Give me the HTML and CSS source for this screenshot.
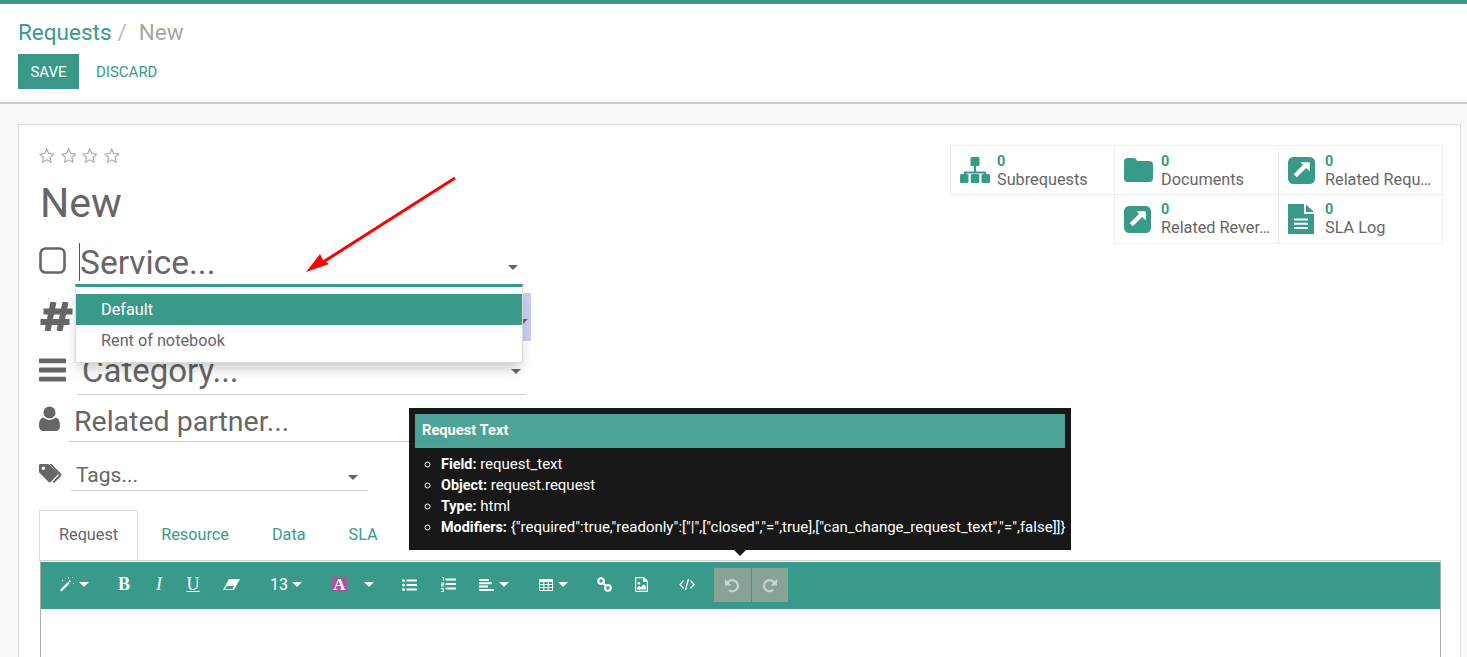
FILE: index.html
```html
<!DOCTYPE html>
<html lang="en">
<head>
    <meta charset="UTF-8">
    <title>Requests / New</title>
    <link rel="stylesheet" href="styles.css">
</head>
<body>
    <svg class="defs" width="0" height="0">
        <symbol id="star" viewBox="0 0 16 16"><path d="M8 1.200l2.100 4.500 4.900.6-3.600 3.400.9 4.900L8 12.200l-4.300 2.400.9-4.900L1 6.300l4.900-.6z" fill="none" stroke="#a8a8a8" stroke-width="1.200"/></symbol>
        <symbol id="extlink" viewBox="0 0 26 26"><path fill-rule="evenodd" d="M5 0h16a5 5 0 0 1 5 5v16a5 5 0 0 1-5 5H5a5 5 0 0 1-5-5V5a5 5 0 0 1 5-5zm7 5h9v9l-3.500-3.500-9 9-3-3 9-9z" fill="#3a9a8a"/></symbol>
    </svg>

    <header class="control-panel">
        <div class="breadcrumb">
            <a class="crumb-link">Requests</a><span class="crumb-sep">/</span><span class="crumb-current">New</span>
        </div>
        <div class="actions">
            <button class="btn-save">SAVE</button>
            <button class="btn-discard">DISCARD</button>
        </div>
    </header>

    <main class="content">
        <div class="sheet">
            <div class="sheet-top">
                <div class="form-col">
                    <div class="stars">
                        <svg class="star"><use href="#star"/></svg>
                        <svg class="star"><use href="#star"/></svg>
                        <svg class="star"><use href="#star"/></svg>
                        <svg class="star"><use href="#star"/></svg>
                    </div>
                    <h1 class="title">New</h1>

                    <div class="row row-service">
                        <svg class="icon-check" viewBox="0 0 27 27"><rect x="1.500" y="1.500" width="24" height="24" rx="5" fill="none" stroke="#666" stroke-width="2.600"/></svg>
                        <div class="field field-service"><span class="cursor"></span>Service...<span class="caret caret-dark"></span></div>
                        <div class="dropdown">
                            <div class="option option-active">Default</div>
                            <div class="option">Rent of notebook</div>
                        </div>
                    </div>

                    <div class="row row-hash">
                        <svg class="icon-hash" viewBox="0 0 32 29"><path d="M7 29l6-29M19 29l6-29M3 9.500h29M0 20h29" fill="none" stroke="#666" stroke-width="6"/></svg>
                        <div class="field-required"><span class="caret caret-dark"></span></div>
                    </div>

                    <div class="row row-category">
                        <svg class="icon-bars" viewBox="0 0 28 24"><path d="M1 0h26a1 1 0 0 1 1 1v3a1 1 0 0 1-1 1H1a1 1 0 0 1-1-1V1a1 1 0 0 1 1-1zm0 9.500h26a1 1 0 0 1 1 1v3a1 1 0 0 1-1 1H1a1 1 0 0 1-1-1v-3a1 1 0 0 1 1-1zM1 19h26a1 1 0 0 1 1 1v3a1 1 0 0 1-1 1H1a1 1 0 0 1-1-1v-3a1 1 0 0 1 1-1z" fill="#666"/></svg>
                        <div class="field field-category">Category...<span class="caret caret-dark"></span></div>
                    </div>

                    <div class="row row-partner">
                        <svg class="icon-user" viewBox="0 0 21 25"><circle cx="10.500" cy="6.500" r="6" fill="#666"/><path d="M4.500 11.500c1.500 1.500 3.600 2.400 6 2.400s4.500-.9 6-2.400c2.800.3 4.500 3.200 4.500 8.500 0 3-2 5-4.500 5h-12C2 25 0 23 0 20c0-5.300 1.700-8.200 4.500-8.500z" fill="#666"/></svg>
                        <div class="field field-partner">Related partner...</div>
                    </div>

                    <div class="row row-tags">
                        <svg class="icon-tags" viewBox="0 0 24 20"><path d="M1.500 0h7.300c.6 0 1.200.3 1.700.7l8 8.200c.6.600.6 1.500 0 2.100l-6.800 6.900c-.6.600-1.500.6-2.100 0L1.300 9.600C.7 9 0 8.200 0 7.400V1.500C0 .7.700 0 1.500 0zM4.300 2.500a1.800 1.800 0 1 0 0 3.600 1.800 1.800 0 0 0 0-3.600z" fill="#666" fill-rule="evenodd"/><path d="M12.500 0l9.500 9.800c.6.600.6 1.500 0 2.100L15 19l-1.500-1 6.500-7.100L10.500 0z" fill="#666"/></svg>
                        <div class="field field-tags">Tags...<span class="caret caret-dark"></span></div>
                    </div>
                </div>

                <div class="stats">
                    <div class="stat">
                        <div class="stat-icon">
                            <svg width="30" height="26" viewBox="0 0 30 26"><path d="M15 6v10M5 20v-4.500h20V20" fill="none" stroke="#3a9a8a" stroke-width="2"/><rect x="10.500" width="9" height="9" rx="1.500" fill="#3a9a8a"/><rect y="17" width="8.500" height="9" rx="1.500" fill="#3a9a8a"/><rect x="10.800" y="17" width="8.500" height="9" rx="1.500" fill="#3a9a8a"/><rect x="21.500" y="17" width="8.500" height="9" rx="1.500" fill="#3a9a8a"/></svg>
                        </div>
                        <div class="stat-text"><span class="stat-count">0</span><span class="stat-label">Subrequests</span></div>
                    </div>
                    <div class="stat">
                        <div class="stat-icon">
                            <svg width="29" height="24" viewBox="0 0 29 24"><path d="M3.500 0h6c2 0 3 1 3.500 3h12.500C27.500 3 29 4.500 29 6.500V20.500c0 2-1.500 3.500-3.500 3.500h-22C1.500 24 0 22.500 0 20.500v-17C0 1.500 1.500 0 3.500 0z" fill="#3a9a8a"/></svg>
                        </div>
                        <div class="stat-text"><span class="stat-count">0</span><span class="stat-label">Documents</span></div>
                    </div>
                    <div class="stat">
                        <div class="stat-icon"><svg class="icon-ext"><use href="#extlink"/></svg></div>
                        <div class="stat-text"><span class="stat-count">0</span><span class="stat-label">Related Requ…</span></div>
                    </div>
                    <div class="stat stat-blank"></div>
                    <div class="stat">
                        <div class="stat-icon"><svg class="icon-ext"><use href="#extlink"/></svg></div>
                        <div class="stat-text"><span class="stat-count">0</span><span class="stat-label">Related Rever…</span></div>
                    </div>
                    <div class="stat">
                        <div class="stat-icon">
                            <svg width="26" height="30" viewBox="0 0 26 30"><path fill-rule="evenodd" d="M0 0h16v10h10v20H0zM6 14.500v2h14v-2zM6 18.800v2h14v-2zM6 23v2h14v-2z" fill="#3a9a8a"/><path d="M18 .5L26 8h-8z" fill="#3a9a8a"/></svg>
                        </div>
                        <div class="stat-text"><span class="stat-count">0</span><span class="stat-label">SLA Log</span></div>
                    </div>
                </div>
            </div>

            <ul class="tabs">
                <li class="tab tab-active">Request</li>
                <li class="tab">Resource</li>
                <li class="tab">Data</li>
                <li class="tab">SLA</li>
            </ul>

            <div class="editor">
                <div class="toolbar">
                    <span class="tool t-wand">
                        <svg width="14" height="15" viewBox="0 0 14 15"><path d="M1.500 14.500L0 13l8-8 1.500 1.500zM9.500 3l1.500 1.500-1 1L8.500 4z" fill="#fff"/><path d="M5 1h1v1H5zM2 3h1v1H2zM12 0h1v1h-1zM13 6h1v1h-1zM8 0h1v2H8z" fill="#fff"/></svg>
                        <span class="caret caret-white"></span>
                    </span>
                    <span class="tool t-bold">B</span>
                    <span class="tool t-italic">I</span>
                    <span class="tool t-under">U</span>
                    <span class="tool t-eraser">
                        <svg width="17" height="12" viewBox="0 0 17 12"><path d="M6 0h11l-6 11H0z" fill="#fff"/><path d="M1.500 10.200L4 7h7l-1.700 3.200z" fill="#3a9a8a"/></svg>
                    </span>
                    <span class="tool t-size">13<span class="caret caret-white"></span></span>
                    <span class="tool t-color">A</span>
                    <span class="tool t-colorcaret"><span class="caret caret-white"></span></span>
                    <span class="tool t-ul">
                        <svg width="15" height="12" viewBox="0 0 15 12"><circle cx="1.500" cy="1.500" r="1.500" fill="#fff"/><circle cx="1.500" cy="6" r="1.500" fill="#fff"/><circle cx="1.500" cy="10.500" r="1.500" fill="#fff"/><path d="M4.500.500H15v2H4.500zM4.500 5H15v2H4.500zM4.500 9.500H15v2H4.500z" fill="#fff"/></svg>
                    </span>
                    <span class="tool t-ol">
                        <svg width="15" height="15" viewBox="0 0 15 15"><path d="M4.500 1.500H15v2H4.500zM4.500 6H15v2H4.500zM4.500 10.500H15v2H4.500z" fill="#fff"/><path d="M1 0h2v3.500H2V1H1zM0 5.500h3v2.200H1v.8h2v1H0V7h2v-.5H0zM0 11h3v4H0v-1h2v-.5H1v-1h1V12H0z" fill="#fff"/></svg>
                    </span>
                    <span class="tool t-align">
                        <svg width="15" height="12" viewBox="0 0 15 12"><path d="M0 0h10v2H0zM0 3.300h13v2H0zM0 6.600h9v2H0zM0 10h15v2H0z" fill="#fff"/></svg>
                        <span class="caret caret-white"></span>
                    </span>
                    <span class="tool t-table">
                        <svg width="14" height="12" viewBox="0 0 14 12"><path fill-rule="evenodd" d="M0 0h14v12H0zM1 3v2h3.300V3zM5.300 3v2h3.400V3zM9.700 3v2H13V3zM1 6v2h3.300V6zM5.300 6v2h3.400V6zM9.700 6v2H13V6zM1 9v2h3.300V9zM5.300 9v2h3.400V9zM9.700 9v2H13V9z" fill="#fff"/></svg>
                        <span class="caret caret-white"></span>
                    </span>
                    <span class="tool t-link">
                        <svg width="15" height="15" viewBox="0 0 14 14"><circle cx="3.800" cy="3.800" r="2.600" fill="none" stroke="#fff" stroke-width="2"/><circle cx="10.200" cy="10.200" r="2.600" fill="none" stroke="#fff" stroke-width="2"/><path d="M5.500 5.500l3 3" stroke="#fff" stroke-width="2"/></svg>
                    </span>
                    <span class="tool t-image">
                        <svg width="13" height="15" viewBox="0 0 13 15"><path fill-rule="evenodd" d="M1 0h8l4 4v10a1 1 0 0 1-1 1H1a1 1 0 0 1-1-1V1a1 1 0 0 1 1-1zm.200 1.200v12.600h10.600V5H8V1.200z" fill="#fff"/><circle cx="3.800" cy="6.200" r="1.300" fill="#fff"/><path d="M2.200 12.500v-1.700l2-2 1.500 1.500 3-3 2.100 2.200v3z" fill="#fff"/></svg>
                    </span>
                    <span class="tool t-code">
                        <svg width="16" height="11" viewBox="0 0 16 11"><path d="M4.500 1.500L1 5.500l3.500 4M11.500 1.500l3.500 4-3.500 4M9.500 0L6.500 11" fill="none" stroke="#fff" stroke-width="1.300"/></svg>
                    </span>
                    <div class="history">
                        <span class="hist-btn">
                            <svg width="15" height="15" viewBox="0 0 14 14"><path d="M2 5.500A5.200 5.200 0 1 1 3.600 11.200" fill="none" stroke="#fff" stroke-width="2"/><path d="M0 1v6h6z" fill="#fff"/></svg>
                        </span>
                        <span class="hist-btn">
                            <svg width="15" height="15" viewBox="0 0 14 14"><path d="M12 5.500A5.200 5.200 0 1 0 10.400 11.200" fill="none" stroke="#fff" stroke-width="2"/><path d="M14 1v6H8z" fill="#fff"/></svg>
                        </span>
                    </div>
                </div>
                <div class="editor-body"></div>
            </div>

            <div class="tooltip">
                <div class="tooltip-title">Request Text</div>
                <ul class="tooltip-list">
                    <li><b>Field:</b> request_text</li>
                    <li><b>Object:</b> request.request</li>
                    <li><b>Type:</b> html</li>
                    <li><b>Modifiers:</b> {"required":true,"readonly":["|",["closed","=",true],["can_change_request_text","=",false]]}</li>
                </ul>
                <span class="tooltip-arrow"></span>
            </div>
        </div>
    </main>

    <svg class="annotation" width="170" height="110" viewBox="0 0 170 110">
        <path d="M155 7L20 93" stroke="#f00" stroke-width="3" fill="none"/>
        <path d="M6 101l14-18 3 6 6 4z" fill="#f00"/>
    </svg>
</body>
</html>
```

FILE: styles.css
```css
html, body {
    margin: 0;
    height: 657px;
    overflow: hidden;
}
body {
    position: relative;
    font-family: Roboto, "Liberation Sans", sans-serif;
    background-color: #f9f9f9;
    color: #666;
    font-size: 16.250px;
}
.defs {
    position: absolute;
}

/* top bar */
.control-panel {
    height: 98px;
    box-sizing: content-box;
    border-top: 4px solid #3a9a8a;
    border-bottom: 2px solid #ccc;
    background-color: #fff;
    padding-left: 18px;
}
.breadcrumb {
    height: 50px;
    line-height: 57px;
    font-size: 22.500px;
}
.crumb-link {
    color: #3a9a8a;
}
.crumb-sep {
    color: #bbb;
    margin: 0 12px 0 6px;
}
.crumb-current {
    color: #aaa59f;
}
.actions {
    display: flex;
    align-items: center;
}
.btn-save {
    width: 61px;
    height: 35px;
    border: none;
    padding: 0;
    background-color: #3a9a8a;
    color: #fff;
    font: 15px Roboto, sans-serif;
}
.btn-discard {
    margin-left: 17px;
    border: none;
    padding: 0;
    background: none;
    color: #3a9a8a;
    font: 15px Roboto, sans-serif;
}

/* sheet */
.content {
    padding: 20px 6px 0 18px;
}
.sheet {
    position: relative;
    height: 540px;
    padding: 20px 17px 0 20px;
    box-sizing: border-box;
    background-color: #fff;
    border: 1px solid #ddd;
}
.sheet-top {
    display: flex;
    justify-content: space-between;
    align-items: flex-start;
    height: 365px;
}
.form-col {
    width: 492px;
}
.stars {
    display: flex;
    gap: 6px;
    height: 22px;
    align-items: center;
}
.star {
    width: 15.500px;
    height: 15.500px;
}
.title {
    margin: 0 0 0 1px;
    height: 70px;
    font-size: 41px;
    font-weight: 400;
    line-height: 72px;
}

/* form rows */
.row {
    position: relative;
    display: flex;
    align-items: flex-end;
}
.field {
    position: relative;
    box-sizing: border-box;
    white-space: nowrap;
}
.row-service {
    height: 47px;
}
.icon-check {
    width: 27px;
    height: 27px;
    margin-bottom: 10px;
}
.field-service {
    width: 448px;
    margin-left: 13px;
    padding-left: 1px;
    font-size: 33.500px;
    line-height: 43px;
}
.cursor {
    position: absolute;
    left: 0;
    top: 2px;
    height: 38px;
    border-left: 1px solid #555;
}
.row-hash {
    height: 48px;
    margin-top: 9px;
    align-items: center;
}
.icon-hash {
    width: 33px;
    height: 29px;
    margin-left: 1px;
    transform: translateY(-1px);
}
.field-required {
    position: relative;
    width: 456px;
    height: 48px;
    margin-left: 2px;
    box-sizing: border-box;
    background-color: #ccccf5;
    border-bottom: 1px solid #ccc;
}
.row-category {
    height: 45px;
    margin-top: 9px;
}
.icon-bars {
    width: 27px;
    height: 24px;
    margin-bottom: 13px;
}
.field-category {
    width: 449px;
    margin-left: 11px;
    padding-left: 5px;
    font-size: 33px;
    line-height: 42px;
    height: 45px;
    border-bottom: 1px solid #ccc;
}
.row-partner {
    height: 47px;
}
.icon-user {
    width: 21px;
    height: 25px;
    margin-bottom: 11px;
}
.field-partner {
    width: 378px;
    margin-left: 9px;
    padding-left: 5px;
    font-size: 28.500px;
    line-height: 40px;
    height: 40px;
    border-bottom: 1px solid #ccc;
}
.row-tags {
    height: 31px;
    margin-top: 18px;
}
.icon-tags {
    width: 24px;
    height: 20px;
    margin-bottom: 7px;
}
.field-tags {
    width: 297px;
    margin-left: 8px;
    padding-left: 5px;
    font-size: 21px;
    line-height: 30px;
    height: 31px;
    border-bottom: 1px solid #ccc;
}
.caret {
    display: inline-block;
    width: 0;
    height: 0;
    border-left: 5px solid transparent;
    border-right: 5px solid transparent;
}
.caret-dark {
    position: absolute;
    right: 5px;
    border-top: 5px solid #666;
}
.field-service .caret-dark {
    right: 9px;
    top: 24px;
}
.field-required .caret-dark {
    right: 3px;
    top: 26px;
}
.field-category .caret-dark {
    top: 19px;
}
.field-tags .caret-dark {
    top: 15px;
    right: 10px;
}
.caret-white {
    border-top: 5px solid #fff;
    vertical-align: middle;
}

/* service dropdown */
.dropdown {
    position: absolute;
    left: 36px;
    top: 47px;
    width: 448px;
    height: 79px;
    box-sizing: border-box;
    padding-top: 7px;
    background-color: #fff;
    border: 1px solid #ddd;
    border-top: 3px solid #3a9a8a;
    box-shadow: 0 8px 12px -3px rgba(0, 0, 0, 0.22);
    z-index: 2;
}
.option {
    height: 31px;
    line-height: 31px;
    padding-left: 25px;
}
.option-active {
    background-color: #3a9a8a;
    color: #fff;
}

/* stat buttons */
.stats {
    display: grid;
    grid-template-columns: repeat(3, 164px);
    grid-auto-rows: 49px;
    width: 493px;
}
.stat {
    display: flex;
    align-items: center;
    width: 165px;
    height: 50px;
    min-width: 0;
    box-sizing: border-box;
    outline: 1px solid #eee;
    outline-offset: -1px;
}
.stat-blank {
    outline: none;
}
.stat-icon {
    flex: none;
    width: 47px;
    padding-left: 10px;
    box-sizing: border-box;
    display: flex;
}
.icon-ext {
    width: 27px;
    height: 27px;
}
.stat-text {
    align-self: flex-start;
    padding-top: 7px;
    min-width: 0;
    display: flex;
    flex-direction: column;
}
.stat:nth-child(-n+3) .stat-text {
    padding-top: 8px;
}
.stat-count {
    color: #3a9a8a;
    font-weight: 700;
    font-size: 14.500px;
    line-height: 17px;
}
.stat-label {
    line-height: 20px;
    white-space: nowrap;
}

/* tabs */
.tabs {
    display: flex;
    margin: 0 2px 0 0;
    padding: 0;
    list-style-type: none;
    border-bottom: 1px solid #ccc;
}
.tab {
    height: 48px;
    line-height: 48px;
    padding: 0 19px;
    margin-right: 3px;
    color: #3a9a8a;
    border: 1px solid transparent;
}
.tab-active {
    color: #666;
    background-color: #fff;
    border-color: #ddd #ddd #fff;
    margin-bottom: -1px;
}

/* editor */
.editor {
    margin: 0 2px 0 1px;
    border: 1px solid #aaa;
    border-top: 1px solid #fff;
}
.toolbar {
    position: relative;
    display: flex;
    align-items: center;
    height: 47px;
    box-sizing: border-box;
    padding-bottom: 2px;
    background-color: #3a9a8a;
    color: #fff;
}
.tool {
    display: flex;
    align-items: center;
    gap: 5px;
    flex: none;
}
.t-wand { margin-left: 19px; }
.t-bold, .t-italic, .t-under {
    font-family: "Liberation Serif", serif;
    font-size: 18px;
}
.t-bold { margin-left: 29px; font-weight: 700; }
.t-italic { margin-left: 26px; font-style: italic; }
.t-under { margin-left: 24.500px; text-decoration: underline; }
.t-eraser { margin-left: 23.500px; }
.t-size { margin-left: 30px; font-size: 16px; gap: 4px; }
.t-color {
    justify-content: center;
    width: 15px;
    height: 15px;
    margin-left: 30px;
    background-color: #a9579b;
    font: 700 17px "Liberation Serif", serif;
}
.t-colorcaret { margin-left: 17px; }
.t-ul { margin-left: 28px; }
.t-ol { margin-left: 24px; }
.t-align { margin-left: 23px; }
.t-table { margin-left: 30px; }
.t-link { margin-left: 29px; }
.t-image { margin-left: 23px; }
.t-code { margin-left: 31px; }
.history {
    display: flex;
    gap: 1px;
    align-self: flex-start;
    margin: 6px 0 0 19px;
}
.hist-btn {
    display: flex;
    align-items: center;
    justify-content: center;
    width: 36.500px;
    height: 34px;
    background-color: #88a298;
}
.hist-btn svg {
    opacity: 0.55;
}
.editor-body {
    height: 60px;
    background-color: #fff;
}

/* field tooltip */
.tooltip {
    position: absolute;
    left: 390px;
    top: 283px;
    width: 650px;
    height: 130px;
    padding: 6px;
    background-color: #000;
    color: #fff;
    opacity: 0.9;
    font-size: 15px;
    z-index: 3;
}
.tooltip-title {
    height: 34px;
    line-height: 32px;
    padding-left: 7px;
    background-color: #3a9a8a;
    font-size: 14.700px;
    font-weight: 700;
}
.tooltip-list {
    margin: 6px 0 0;
    padding-left: 26px;
    list-style-type: circle;
    line-height: 21px;
    white-space: nowrap;
}
.tooltip-list b {
    font-size: 14.400px;
}
.tooltip-arrow {
    position: absolute;
    left: 325px;
    bottom: -6px;
    width: 0;
    height: 0;
    border-left: 6px solid transparent;
    border-right: 6px solid transparent;
    border-top: 6px solid #000;
}

/* red arrow drawn over the screenshot */
.annotation {
    position: absolute;
    left: 300px;
    top: 171px;
    z-index: 5;
}
```
